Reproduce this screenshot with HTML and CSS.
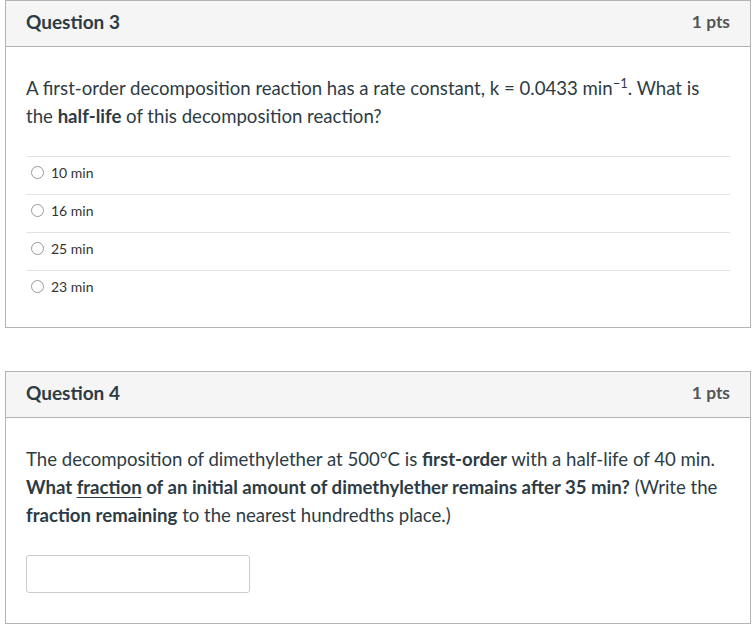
FILE: index.html
```html
<!DOCTYPE html>
<html lang="en">
<head>
    <meta charset="UTF-8">
    <title>Quiz</title>
    <link rel="stylesheet" href="styles.css">
</head>
<body>
 <main class="quiz">
    <div class="question">
        <div class="q-header">
            <h2>Question 3</h2>
            <span class="pts">1 pts</span>
        </div>
        <div class="q-body">
            <p class="q-text">A first-order decomposition reaction has a rate constant, k = 0.0433 min<sup>&minus;1</sup>. What is the <b>half-life</b> of this decomposition reaction?</p>
            <div class="answers">
                <label class="answer"><span class="radio"></span>10 min</label>
                <label class="answer"><span class="radio"></span>16 min</label>
                <label class="answer"><span class="radio"></span>25 min</label>
                <label class="answer"><span class="radio"></span>23 min</label>
            </div>
        </div>
    </div>

    <div class="question">
        <div class="q-header">
            <h2>Question 4</h2>
            <span class="pts">1 pts</span>
        </div>
        <div class="q-body q-body-input">
            <p class="q-text">The decomposition of dimethylether at 500&deg;C is <b>first-order</b> with a half-life of 40 min. <b>What <u>fraction</u> of an initial amount of dimethylether remains after 35 min?</b> (Write the <b>fraction remaining</b> to the nearest hundredths place.)</p>
            <input type="text" class="answer-input">
        </div>
    </div>
 </main>
</body>
</html>
```

FILE: styles.css
```css
*{
    margin: 0;
    padding: 0;
    box-sizing: border-box;
}
body{
    font-family: Lato, "Open Sans", sans-serif;
    color: #2d3b45;
    background: #fff;
}
.quiz{
    padding-left: 5px;
    width: 751px;
}
.question{
    border: 1px solid #b4b4b4;
    margin-bottom: 43px;
}
.question:last-child{
    margin-bottom: 0;
}
.q-header{
    height: 46px;
    background-color: #f5f5f5;
    border-bottom: 1px solid #b4b4b4;
    display: flex;
    align-items: center;
    justify-content: space-between;
    padding: 0 20px 5px 20px;
}
.q-header h2{
    font-size: 19px;
    font-weight: bold;
    color: #2d3b45;
}
.pts{
    font-size: 17.4px;
    font-weight: bold;
    color: #555;
}
.q-body{
    padding: 27px 20px 19px 20px;
}
.q-text{
    font-size: 18.6px;
    line-height: 28px;
}
.q-text sup{
    font-size: 13px;
    line-height: 0;
    vertical-align: 7px;
}
.q-text u{
    text-decoration-thickness: 1px;
    text-underline-offset: 3px;
}
.answers{
    margin-top: 26px;
}
.answer{
    display: flex;
    align-items: center;
    height: 38px;
    border-top: 1px solid #e3e3e3;
    padding: 0 5px 6px 5px;
    font-size: 14px;
    color: #333;
}
.radio{
    width: 13px;
    height: 13px;
    border: 1px solid #999;
    border-radius: 50%;
    margin-right: 7px;
    background: #fff;
}
.q-body-input{
    padding-bottom: 30px;
}
.answer-input{
    display: block;
    margin-top: 26px;
    width: 224px;
    height: 38px;
    border: 1px solid #ccc;
    border-radius: 3px;
    background: #fff;
}
```
